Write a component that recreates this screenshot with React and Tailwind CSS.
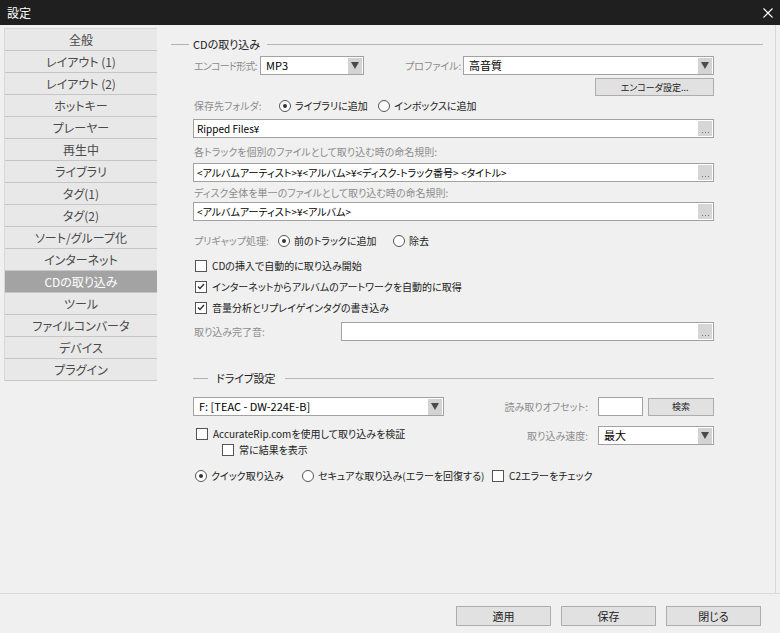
import React from 'react';

const sideItems = [
  '全般', 'レイアウト (1)', 'レイアウト (2)', 'ホットキー', 'プレーヤー', '再生中', 'ライブラリ',
  'タグ(1)', 'タグ(2)', 'ソート/グループ化', 'インターネット', 'CDの取り込み', 'ツール',
  'ファイルコンバータ', 'デバイス', 'プラグイン',
];

function Arrow() {
  return (
    <div className="w-[14px] h-[16px] bg-[#d3d3d3] flex items-center justify-center mr-[1px] shrink-0">
      <svg width="8" height="7" viewBox="0 0 8 7"><path d="M0 0h8L4 7z" fill="#4a4a4a" /></svg>
    </div>
  );
}

function Select({ value, className }) {
  return (
    <div className={`h-[19px] border border-[#a2a2a2] bg-white flex items-center justify-between pl-[5px] text-black text-[11px] shrink-0 ${className}`}>
      <span className="whitespace-nowrap">{value}</span>
      <Arrow />
    </div>
  );
}

function PathInput({ value, className = '' }) {
  return (
    <div className={`h-[19px] border border-[#a2a2a2] bg-white flex items-center justify-between pl-[3px] text-black shrink-0 ${className}`}>
      <span className="whitespace-nowrap">{value}</span>
      <div className="w-[14px] h-[15px] bg-[#d6d6d6] mr-[1px] flex items-end justify-center pb-[3px] gap-[2px] shrink-0">
        <span className="w-[1px] h-[1px] bg-[#777]" />
        <span className="w-[1px] h-[1px] bg-[#777]" />
        <span className="w-[1px] h-[1px] bg-[#777]" />
      </div>
    </div>
  );
}

function Radio({ checked, label, className = '' }) {
  return (
    <div className={`flex items-center gap-[4px] text-[#222] whitespace-nowrap shrink-0 ${className}`}>
      <span className="w-[12px] h-[12px] rounded-full border border-[#555] bg-white flex items-center justify-center shrink-0">
        {checked && <span className="w-[4px] h-[4px] rounded-full bg-[#333]" />}
      </span>
      <span>{label}</span>
    </div>
  );
}

function Check({ checked, label, className = '' }) {
  return (
    <div className={`flex items-center gap-[5px] text-[#222] whitespace-nowrap ${className}`}>
      <span className="w-[12px] h-[12px] border border-[#555] bg-white flex items-center justify-center shrink-0">
        {checked && (
          <svg width="8" height="7" viewBox="0 0 8 7"><path d="M1 3.5l2 2L7 1" stroke="#333" strokeWidth="1.4" fill="none" /></svg>
        )}
      </span>
      <span>{label}</span>
    </div>
  );
}

function Btn({ children, className = '' }) {
  return (
    <div className={`border border-[#adadad] bg-[#e1e1e1] flex items-center justify-center text-[#222] whitespace-nowrap shrink-0 ${className}`}>
      {children}
    </div>
  );
}

export default function App() {
  return (
    <div className="w-[780px] h-[633px] flex flex-col bg-[#f0f0f0] text-[12px] leading-none font-['Noto_Sans_CJK_JP',sans-serif] [font-feature-settings:'palt'] overflow-hidden">
      {/* タイトルバー */}
      <div className="h-[25px] bg-[#1f1f1f] flex items-center justify-between pl-[7px] pr-[7px] text-white">
        <span>設定</span>
        <svg width="10" height="10" viewBox="0 0 10 10"><path d="M0.5 0.5l9 9M9.5 0.5l-9 9" stroke="#fff" strokeWidth="1.1" /></svg>
      </div>

      <div className="h-[568px] flex">
        {/* サイドバー */}
        <div className="w-[157px] pl-[4px] pt-[3px] shrink-0">
          <div className="border-t border-l border-[#d8d8d8]">
            {sideItems.map((s) => (
              <div
                key={s}
                className={`h-[22px] flex items-center justify-center border-b border-[#c6c6c6] ${s === 'CDの取り込み' ? 'bg-[#a3a3a3] text-white' : 'bg-[#e8e8e8] text-[#4a4a4a]'}`}
              >
                {s}
              </div>
            ))}
          </div>
        </div>

        {/* 設定パネル */}
        <div className="w-[619px] border-r border-[#d9d9d9] pl-[36px] shrink-0 text-[10px]">
          <div className="w-[521px] flex flex-col text-[#8c8c8c] whitespace-nowrap">
            <div className="h-[16px] mt-[11px] -ml-[22px] w-[592px] flex items-center">
              <span className="w-[18px] h-px bg-[#b0b0b0]" />
              <span className="ml-[4px] mr-[7px] text-[#222] text-[11px]">CDの取り込み</span>
              <span className="flex-1 h-px bg-[#b8b8b8]" />
            </div>

            <div className="h-[19px] mt-[4px] flex items-center">
              <span className="w-[67px] pl-[1px] shrink-0 tracking-[-0.7px]">エンコード形式:</span>
              <Select value="MP3" className="w-[104px]" />
              <span className="ml-[41px] w-[58px] shrink-0">プロファイル:</span>
              <Select value="高音質" className="w-[251px]" />
            </div>

            <div className="mt-[3px] flex justify-end">
              <Btn className="w-[119px] h-[18px] text-[9px]">エンコーダ設定...</Btn>
            </div>

            <div className="h-[16px] mt-[2px] flex items-center">
              <span className="w-[86px] pl-[1px] shrink-0">保存先フォルダ:</span>
              <Radio checked label="ライブラリに追加" className="w-[99px]" />
              <Radio label="インボックスに追加" />
            </div>

            <PathInput value="Ripped Files¥" className="mt-[5px]" />

            <div className="h-[16px] mt-[6px] flex items-center pl-[1px]">各トラックを個別のファイルとして取り込む時の命名規則:</div>
            <PathInput value="<アルバムアーティスト>¥<アルバム>¥<ディスク-トラック番号> <タイトル>" className="mt-[3px]" />

            <div className="h-[16px] mt-[3px] flex items-center pl-[1px]">ディスク全体を単一のファイルとして取り込む時の命名規則:</div>
            <PathInput value="<アルバムアーティスト>¥<アルバム>" className="mt-[1px]" />

            <div className="h-[16px] mt-[12px] flex items-center">
              <span className="w-[85px] pl-[1px] shrink-0">プリギャップ処理:</span>
              <Radio checked label="前のトラックに追加" className="w-[115px]" />
              <Radio label="除去" />
            </div>

            <div className="mt-[6px] flex flex-col">
              <Check label="CDの挿入で自動的に取り込み開始" className="h-[21px] pl-[2px]" />
              <Check checked label="インターネットからアルバムのアートワークを自動的に取得" className="h-[21px] pl-[2px]" />
              <Check checked label="音量分析とリプレイゲインタグの書き込み" className="h-[21px] pl-[2px]" />
            </div>

            <div className="h-[19px] mt-[4px] flex items-center">
              <span className="pl-[1px]">取り込み完了音:</span>
              <PathInput value="" className="w-[373px] ml-auto" />
            </div>

            <div className="h-[16px] mt-[29px] flex items-center">
              <span className="w-[15px] h-px bg-[#b0b0b0]" />
              <span className="ml-[8px] mr-[9px] text-[#222] text-[11px]">ドライブ設定</span>
              <span className="flex-1 h-px bg-[#b8b8b8]" />
            </div>

            <div className="mt-[11px] flex justify-between">
              <div className="flex flex-col">
                <Select value="F: [TEAC - DW-224E-B]" className="w-[251px] pl-[2px]" />
                <Check label="AccurateRip.comを使用して取り込みを検証" className="h-[16px] mt-[10px] pl-[3px]" />
                <Check label="常に結果を表示" className="h-[16px] pl-[29px]" />
              </div>
              <div className="flex flex-col items-end">
                <div className="h-[19px] flex items-center">
                  <span>読み取りオフセット:</span>
                  <div className="w-[45px] h-[19px] ml-[10px] border border-[#a2a2a2] bg-white" />
                  <Btn className="w-[66px] h-[18px] ml-[5px] text-[9px]">検索</Btn>
                </div>
                <div className="h-[19px] mt-[10px] flex items-center">
                  <span>取り込み速度:</span>
                  <Select value="最大" className="w-[116px] ml-[10px]" />
                </div>
              </div>
            </div>

            <div className="h-[16px] mt-[10px] flex items-center pl-[2px]">
              <Radio checked label="クイック取り込み" className="w-[107px]" />
              <Radio label="セキュアな取り込み(エラーを回復する)" className="w-[190px]" />
              <Check label="C2エラーをチェック" />
            </div>
          </div>
        </div>
      </div>

      {/* 下部ボタン */}
      <div className="flex-1 border-t border-[#d9d9d9] flex justify-end items-start pt-[12px] pr-[19px] gap-[10px]">
        <Btn className="w-[95px] h-[20px] text-[11px]">適用</Btn>
        <Btn className="w-[95px] h-[20px] text-[11px]">保存</Btn>
        <Btn className="w-[95px] h-[20px] text-[11px]">閉じる</Btn>
      </div>
    </div>
  );
}
